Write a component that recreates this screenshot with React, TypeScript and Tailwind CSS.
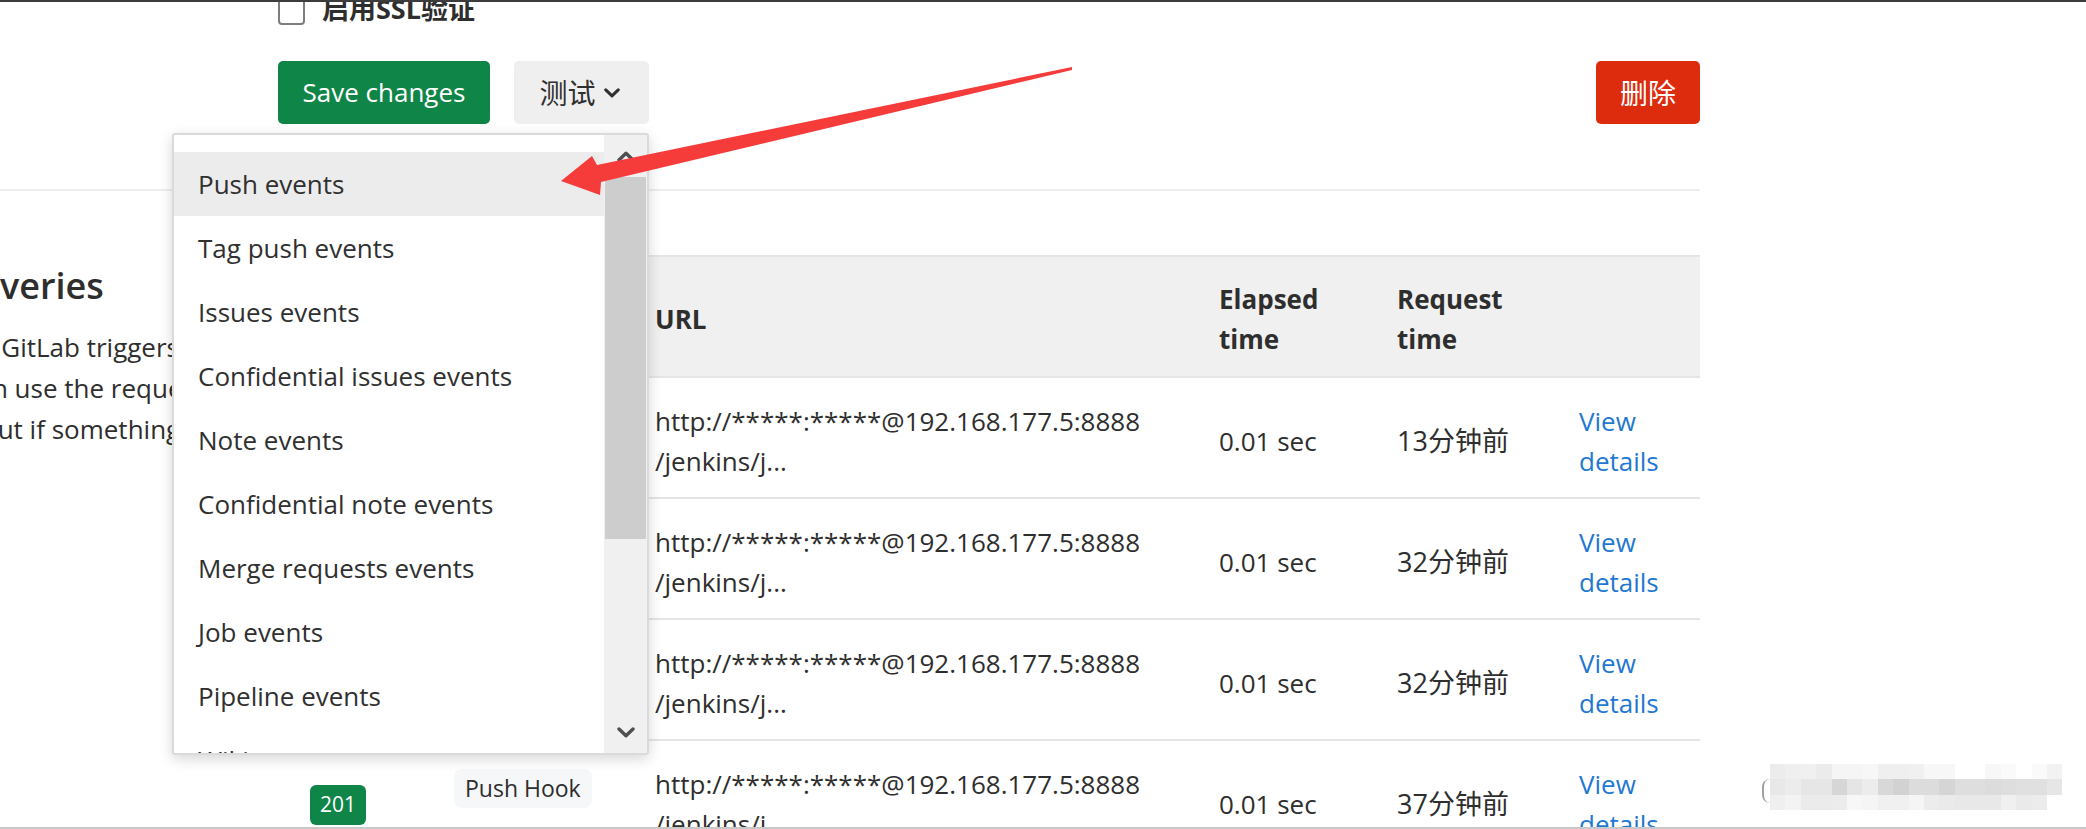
import React from 'react';

const EVENTS = [
  'Push events',
  'Tag push events',
  'Issues events',
  'Confidential issues events',
  'Note events',
  'Confidential note events',
  'Merge requests events',
  'Job events',
  'Pipeline events',
  'Wiki page events',
];

const DELIVERIES = [
  { status: '201', trigger: 'Push Hook', elapsed: '0.01 sec', ago: '13分钟前' },
  { status: '201', trigger: 'Push Hook', elapsed: '0.01 sec', ago: '32分钟前' },
  { status: '201', trigger: 'Push Hook', elapsed: '0.01 sec', ago: '32分钟前' },
  { status: '201', trigger: 'Push Hook', elapsed: '0.01 sec', ago: '37分钟前' },
];

// blurred watermark, bottom right
const MOSAIC = [
  ['#ececec', '#efefef', '#f0f0f0', '#ebebeb', '#f5f5f5', '#f5f5f5', '#f7f7f7', '#efefef', '#efefef', '#f0f0f0', '#f7f7f7', '#f7f7f7', '#ffffff', '#ffffff', '#f7f7f7', '#fafafa', '#ffffff', '#fafafa', '#f2f2f2'],
  ['#e8e8e8', '#ececec', '#e6e6e6', '#e6e6e6', '#d6d6d6', '#e5e5e5', '#ececec', '#d8d8d8', '#d2d2d2', '#dcdcdc', '#dcdcdc', '#d5d5d5', '#dedede', '#dedede', '#dcdcdc', '#dedede', '#e0e0e0', '#e0e0e0', '#e6e6e6'],
  ['#efefef', '#f3f3f3', '#ebebeb', '#ebebeb', '#ececec', '#f7f7f7', '#f5f5f5', '#f0f0f0', '#f0f0f0', '#f5f5f5', '#ececec', '#eaeaea', '#e8e8e8', '#e8e8e8', '#e8e8e8', '#f0f0f0', '#eaeaea', '#ececec', '#ffffff'],
];

const COLS = 'grid grid-cols-[144px_201px_564px_178px_182px_153px]';

function Chevron({ up = false, className = '' }: { up?: boolean; className?: string }) {
  return (
    <svg viewBox="0 0 18 11" className={className} fill="none" stroke="currentColor" strokeWidth={3.4} strokeLinecap="round" strokeLinejoin="round">
      {up ? <path d="M2 9 9 2.2 16 9" /> : <path d="M2 2 9 8.8 16 2" />}
    </svg>
  );
}

function EventsDropdown() {
  return (
    <div className="absolute right-0 top-[72px] z-10 flex h-[622px] w-[477px] overflow-hidden rounded-[3px] border-2 border-[#dadada] bg-white shadow-[0_4px_14px_rgba(0,0,0,0.16)]">
      <ul className="flex-1 overflow-hidden pt-[17px]">
        {EVENTS.map((name, i) => (
          <li
            key={name}
            className={`flex h-[64px] items-center whitespace-nowrap pl-[24px] text-[26px] text-[#303030] ${i === 0 ? 'bg-[#ececec]' : ''}`}
          >
            {name}
          </li>
        ))}
      </ul>
      <div className="flex w-[43px] flex-col bg-[#f0f0f0]">
        <div className="flex h-[42px] items-center justify-center text-[#4f4f4f]">
          <Chevron up className="h-[11px] w-[18px]" />
        </div>
        <div className="mx-[1px] h-[362px] bg-[#cdcdcd]" />
        <div className="flex-1" />
        <div className="flex h-[42px] items-center justify-center text-[#4f4f4f]">
          <Chevron className="h-[11px] w-[18px]" />
        </div>
      </div>
    </div>
  );
}

function DeliveriesTable() {
  return (
    <div className="text-[26px] leading-[40px] text-[#2e2e2e]">
      <div className={`${COLS} h-[123px] items-center border-y-2 border-[#e5e5e5] bg-[#f0f0f0] pt-[4px] font-bold`}>
        <div className="px-[32px]">Status</div>
        <div className="px-[32px]">Trigger</div>
        <div className="px-[32px]">URL</div>
        <div className="px-[32px]">Elapsed<br />time</div>
        <div className="px-[32px]">Request<br />time</div>
        <div />
      </div>
      {DELIVERIES.map((d, i) => (
        <div key={i} className={`${COLS} h-[121px] items-center border-b-2 border-[#e5e5e5] pt-[6px]`}>
          <div className="px-[32px]">
            <span className="inline-flex h-[40px] w-[56px] items-center justify-center rounded-[6px] bg-[#108548] text-[21px] leading-none text-white">
              {d.status}
            </span>
          </div>
          <div className="px-[32px]">
            <span className="mb-[32px] inline-flex h-[39px] items-center whitespace-nowrap rounded-[8px] bg-[#f6f7f9] px-[11px] text-[23px] leading-none">
              {d.trigger}
            </span>
          </div>
          <div className="whitespace-nowrap px-[32px]">
            <div>http://*****:*****@192.168.177.5:8888</div>
            <div>/jenkins/j...</div>
          </div>
          <div className="whitespace-nowrap px-[32px]">{d.elapsed}</div>
          <div className="whitespace-nowrap px-[32px] text-[27px]">{d.ago}</div>
          <div className="px-[32px] text-[#1f78d1]">
            View
            <br />
            details
          </div>
        </div>
      ))}
    </div>
  );
}

export default function App() {
  return (
    <div className="relative h-[829px] w-[2086px] overflow-hidden border-y-2 border-t-[#3c3c3c] border-b-[#c8c8c8] bg-white font-['Open_Sans','Noto_Sans_CJK_SC',sans-serif] text-[#2e2e2e]">
      <div className="w-[1700px]">
        {/* webhook form footer */}
        <div className="flex h-[189px] border-b-2 border-[#eeeeee]">
          <div className="w-[278px] shrink-0" />
          <div className="flex-1">
            <label className="-mt-[13px] flex h-[40px] items-center gap-[17px]">
              <span className="mt-[4px] h-[27px] w-[27px] rounded-[4px] border-2 border-[#7d7d7d] bg-white" />
              <span className="text-[27px] font-bold">启用SSL验证</span>
            </label>
            <div className="mt-[32px] flex items-start justify-between">
              <div className="flex gap-[24px]">
                <button type="button" className="h-[63px] w-[212px] rounded-[5px] bg-[#108548] text-[26px] text-white">
                  Save changes
                </button>
                <div className="relative">
                  <button type="button" className="flex h-[63px] w-[135px] items-center justify-center gap-[8px] rounded-[5px] bg-[#efefef] pr-[4px] text-[28px] text-[#303030]">
                    测试
                    <Chevron className="h-[10px] w-[16px]" />
                  </button>
                  <EventsDropdown />
                </div>
              </div>
              <button type="button" className="h-[63px] w-[104px] rounded-[5px] bg-[#dd2b0e] text-[28px] text-white">
                删除
              </button>
            </div>
          </div>
        </div>

        {/* recent deliveries */}
        <div className="flex">
          <div className="w-[278px] shrink-0 whitespace-nowrap">
            <h4 className="-ml-[196px] mt-[71px] text-[36px] font-semibold leading-[48px]">Recent Deliveries</h4>
            <div className="mt-[17px] text-[26px] leading-[41px]">
              <div className="-ml-[28px]">in GitLab triggers a</div>
              <div className="-ml-[35px]">can use the request</div>
              <div className="-ml-[18px]">out if something went</div>
            </div>
          </div>
          <div className="w-[1422px] shrink-0 pt-[64px]">
            <DeliveriesTable />
          </div>
        </div>
      </div>

      {/* annotation arrow */}
      <svg className="pointer-events-none absolute left-0 top-0 z-20 h-[829px] w-[2086px]" viewBox="0 0 2086 829">
        <polygon points="561,179 592,154 597,163 1072,65 1072,68 601,180 600,193" fill="#f63b3b" />
      </svg>

      {/* pixelated watermark */}
      <div className="absolute left-[1762px] top-[777px] h-[24px] w-[8px] rounded-l-full border-l-2 border-[#a0a0a0]" />
      <div className="absolute left-[1770px] top-[762px] flex flex-col">
        {MOSAIC.map((row, r) => (
          <div key={r} className="flex">
            {row.map((c, k) => (
              <div key={k} className="h-[15.4px] w-[15.4px]" style={{ backgroundColor: c }} />
            ))}
          </div>
        ))}
      </div>
    </div>
  );
}
